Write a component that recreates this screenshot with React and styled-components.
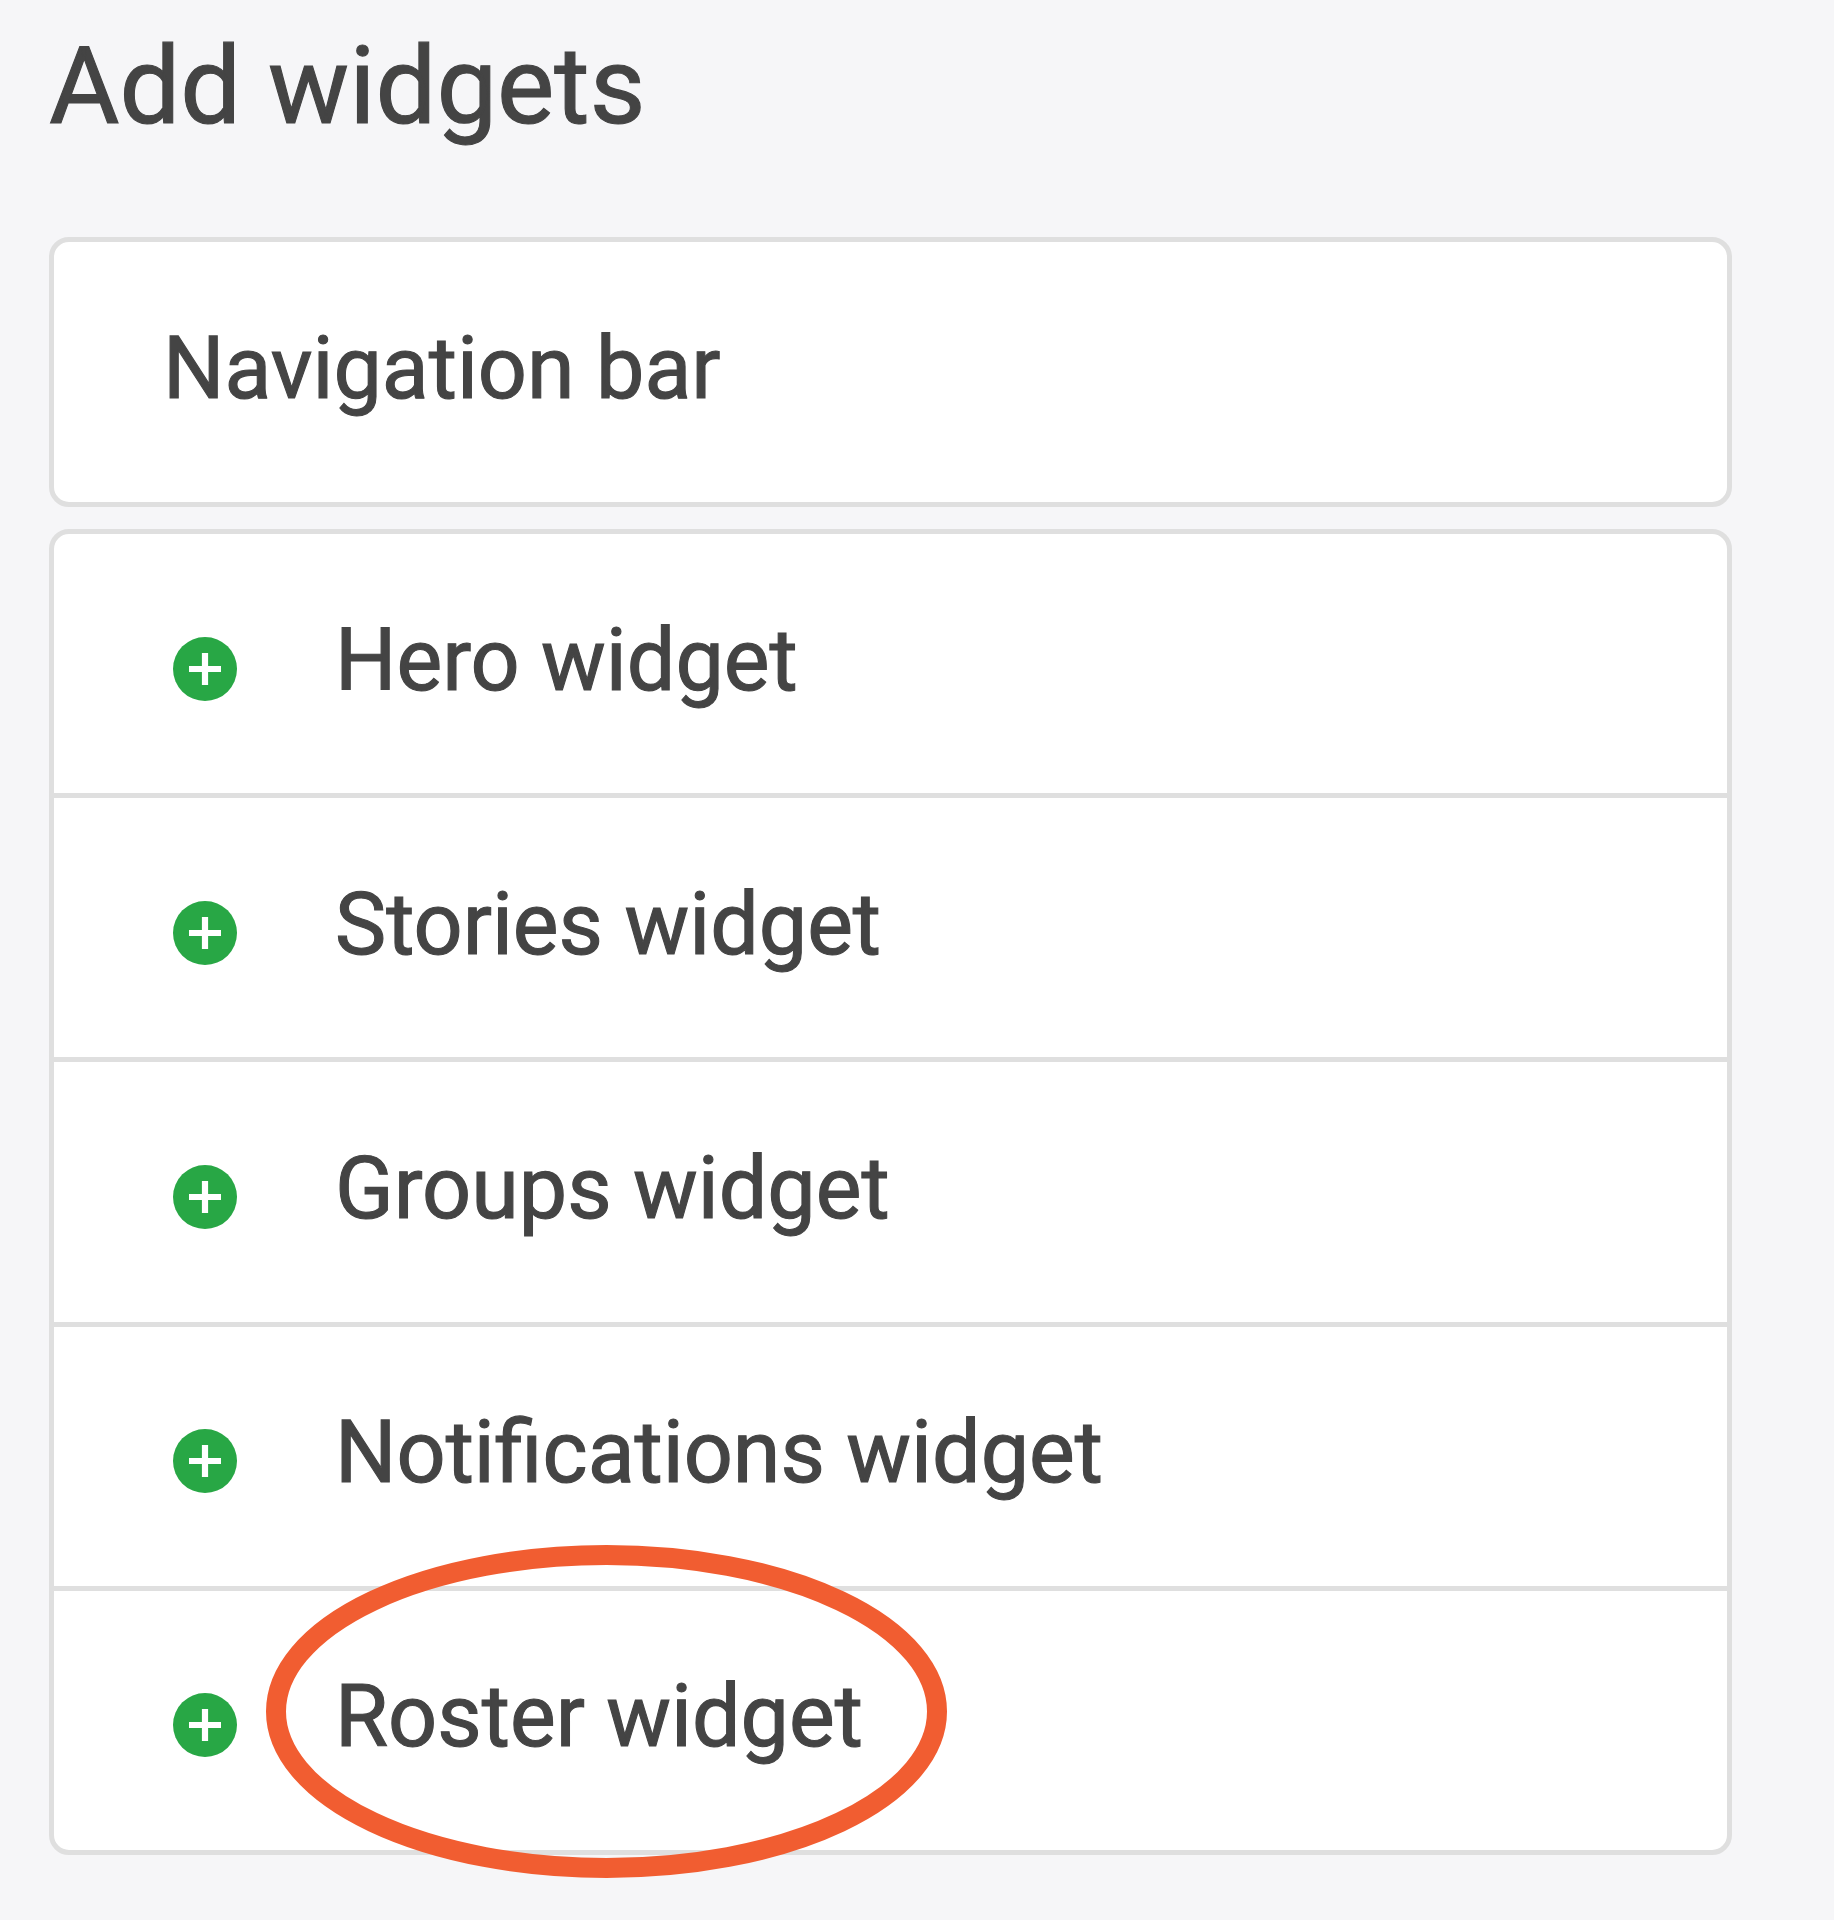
import React from "react";
import styled, { createGlobalStyle } from "styled-components";

const GlobalStyle = createGlobalStyle`
  * { box-sizing: border-box; }
  body {
    margin: 0;
    background: #f6f6f8;
    color: #444444;
    font-family: Roboto, sans-serif;
    -webkit-text-stroke: 1.1px #444444;
  }
`;

const Page = styled.main`
  min-height: 1920px;
  padding: 21px 102px 0 49px;
`;

const Title = styled.h1`
  margin: 0 0 86px;
  height: 130px;
  font-size: 108px;
  line-height: 130px;
  font-weight: 400;
  white-space: nowrap;
`;

const Card = styled.section`
  border: 5px solid #dfdfdf;
  border-radius: 20px;
  background: #ffffff;
  margin-bottom: 22px;
`;

const Row = styled.div`
  position: relative;
  display: flex;
  align-items: center;
  height: ${(p) => (p.$lead ? 260 : p.$last ? 259.2 : 264.2)}px;
  padding: 0 109px 6px;
  border-bottom: ${(p) => (p.$last ? 0 : 5)}px solid #dfdfdf;
`;

const Label = styled.span`
  font-size: 86.2px;
  line-height: 100px;
  white-space: nowrap;
`;

const AddButton = styled.button`
  display: flex;
  margin: 16px 98px 0 10px;
  padding: 0;
  border: 0;
  background: none;
`;

const Highlight = styled.svg`
  position: absolute;
  left: 211.7px;
  top: -46px;
  overflow: visible;
  pointer-events: none;
`;

const widgets = ["Hero", "Stories", "Groups", "Notifications", "Roster"];

function PlusCircle() {
  return (
    <svg width="64" height="64" viewBox="0 0 64 64" aria-hidden="true">
      <circle cx="32" cy="32" r="32" fill="#28a745" />
      <path d="M32 16v32M16 32h32" stroke="#fff" strokeWidth="6.2" />
    </svg>
  );
}

export default function App() {
  return (
    <>
      <GlobalStyle />
      <Page>
        <Title>Add widgets</Title>
        <Card>
          <Row $lead $last>
            <Label>Navigation bar</Label>
          </Row>
        </Card>
        <Card>
          {widgets.map((name, i) => {
            const last = i === widgets.length - 1;
            return (
              <Row key={name} $last={last}>
                <AddButton aria-label={"Add " + name}>
                  <PlusCircle />
                </AddButton>
                <Label>{name} widget</Label>
                {last && (
                  <Highlight width="681" height="333" viewBox="0 0 681 333">
                    <ellipse cx="340.5" cy="166.5" rx="330.5" ry="156.5" fill="none" stroke="#f15d31" strokeWidth="20" />
                  </Highlight>
                )}
              </Row>
            );
          })}
        </Card>
      </Page>
    </>
  );
}
